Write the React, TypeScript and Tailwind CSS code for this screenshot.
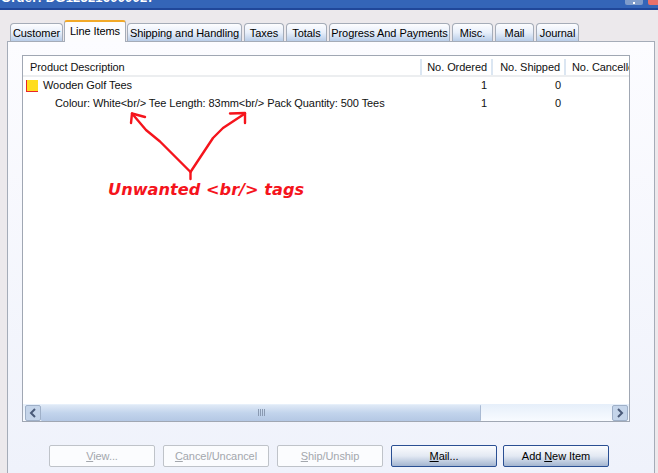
import { ReactNode } from "react";

const tabs = [
  { label: "Customer", width: "w-[53px]" },
  { label: "Line Items", width: "w-[62px]", active: true },
  { label: "Shipping and Handling", width: "w-[115px]" },
  { label: "Taxes", width: "w-[40px]" },
  { label: "Totals", width: "w-[41px]" },
  { label: "Progress And Payments", width: "w-[121px]" },
  { label: "Misc.", width: "w-[41px]" },
  { label: "Mail", width: "w-[39px]" },
  { label: "Journal", width: "w-[43px]" },
];

function Tab({ label, width, active }: { label: string; width: string; active?: boolean }) {
  if (active) {
    return (
      <div className={`${width} relative z-10 -mb-px h-[22px] -mx-px shrink-0 whitespace-nowrap rounded-t-[3px] border-t-2 border-x border-t-[#f2a928] border-x-[#a5acb8] bg-[#fcfcfe] text-center text-black leading-[18px]`}>
        {label}
      </div>
    );
  }
  return (
    <div className={`${width} h-[18px] shrink-0 whitespace-nowrap rounded-t-[4px] border border-b-0 border-[#a5acb8] bg-gradient-to-b from-[#fdfdff] via-[#e8effa] to-[#b9cde8] text-center text-black leading-[18px]`}>
      {label}
    </div>
  );
}

function ActionButton({ children, disabled, margin = "mr-2" }: { children: ReactNode; disabled?: boolean; margin?: string }) {
  const look = disabled
    ? "border-[#bfc3c9] bg-[#fbfcfe] text-[#a3a7ad]"
    : "border-[#2a4f93] bg-gradient-to-b from-[#fbfcfe] via-[#e3e9f3] to-[#a3b5d0] text-black";
  return (
    <div className={`${look} ${margin} flex h-[22px] w-[106px] shrink-0 items-center justify-center rounded-[2px] border`}>
      {children}
    </div>
  );
}

function ScrollButton({ dir }: { dir: "left" | "right" }) {
  return (
    <div className="flex h-[16px] w-[16px] shrink-0 items-center justify-center rounded-[2px] border border-[#9fb0c8] bg-[#c5d5ea]">
      <svg width="8" height="10" viewBox="0 0 8 10">
        <path d={dir === "left" ? "M6 1 L2 5 L6 9" : "M2 1 L6 5 L2 9"} fill="none" stroke="#4a5a78" strokeWidth="2" />
      </svg>
    </div>
  );
}

export default function App() {
  return (
    <div className="relative flex h-[473px] w-[658px] flex-col overflow-hidden bg-[#ece9ec] text-[11px] tracking-[-0.07px] font-['Liberation_Sans',sans-serif]">
      {/* Cropped title bar */}
      <div className="flex h-[10px] shrink-0 items-start justify-between overflow-hidden border-b-2 border-[#20479a] bg-[#3465b8]">
        <span className="-mt-[9px] pl-[1px] text-[13px] font-bold leading-[14px] tracking-[0.2px] text-white whitespace-nowrap">Order: DG123216000027</span>
        <div className="flex items-start">
          <div className="mr-[5px] flex h-[5px] w-[18px] items-center justify-center rounded-b-[2px] bg-[#7f9ccb]">
            <div className="h-[2px] w-[2px] bg-white" />
          </div>
          <div className="h-[5px] w-[10px] rounded-bl-[2px] bg-[#e8706a]" />
        </div>
      </div>

      {/* Tabs */}
      <div className="ml-[10px] mt-[11px] flex h-[20px] shrink-0 items-end gap-[2px]">
        {tabs.map((t) => (
          <Tab key={t.label} {...t} />
        ))}
      </div>

      {/* Tab page */}
      <div className="ml-[7px] w-[648px] flex-1 border-x border-t-[1px] border-[#a5acb8] bg-gradient-to-b from-[#fcfcff] to-[#eff2fb] px-[14px] pt-[13px]">
        <div className="flex h-[367px] w-[608px] flex-col border border-[#a0a7b3] bg-white">
          {/* Header */}
          <div className="flex h-[21px] shrink-0 items-center border-b-2 border-[#eceef0] pt-[3px] text-[#111]">
            <div className="w-[397px] pl-[7px]">Product Description</div>
            <div className="w-[71px] border-l-2 border-[#dbe6f2] pr-[4px] text-right leading-[16px]">No. Ordered</div>
            <div className="w-[73px] border-l-2 border-[#dbe6f2] pr-[4px] text-right leading-[16px]">No. Shipped</div>
            <div className="w-[65px] overflow-hidden whitespace-nowrap border-l-2 border-[#dbe6f2] pl-[6px] leading-[16px]">No. Cancelled</div>
          </div>

          {/* Rows */}
          <div className="flex h-[17px] items-center text-[#111]">
            <div className="flex w-[397px] items-center pl-[3px]">
              <div className="mr-[5px] h-[12px] w-[12px] border-b border-l border-[#e8262a] bg-[#ffdd1e]" />
              Wooden Golf Tees
            </div>
            <div className="w-[67px] text-right">1</div>
            <div className="w-[74px] text-right">0</div>
          </div>
          <div className="flex h-[17px] items-center pt-[1px] text-[#111]">
            <div className="w-[397px] whitespace-nowrap pl-[32px]">{"Colour: White<br/> Tee Length: 83mm<br/> Pack Quantity: 500 Tees"}</div>
            <div className="w-[67px] text-right">1</div>
            <div className="w-[74px] text-right">0</div>
          </div>

          {/* Scrollbar */}
          <div className="mt-auto flex h-[17px] shrink-0 items-center bg-gradient-to-b from-[#e6effa] to-[#f8fbff] pl-[2px] pr-[1px]">
            <ScrollButton dir="left" />
            <div className="flex h-[16px] w-[440px] items-center justify-center rounded-[1px] border-r border-[#a9bad3] bg-gradient-to-b from-[#dfe9f6] via-[#c2d4ec] to-[#b4c8e4]">
              <div className="ml-[1px] flex gap-[1px]">
                <div className="h-[7px] w-px bg-[#8a9ab2]" />
                <div className="h-[7px] w-px bg-[#8a9ab2]" />
                <div className="h-[7px] w-px bg-[#8a9ab2]" />
                <div className="h-[7px] w-px bg-[#8a9ab2]" />
              </div>
            </div>
            <div className="flex-1" />
            <ScrollButton dir="right" />
          </div>
        </div>

        {/* Action buttons */}
        <div className="ml-[27px] mt-[23px] flex">
          <ActionButton disabled><span><u>V</u>iew...</span></ActionButton>
          <ActionButton disabled><span><u>C</u>ancel/Uncancel</span></ActionButton>
          <ActionButton disabled><span><u>S</u>hip/Unship</span></ActionButton>
          <ActionButton margin="mr-[6px]"><span><u>M</u>ail...</span></ActionButton>
          <ActionButton><span>Add <u>N</u>ew Item</span></ActionButton>
        </div>
      </div>

      {/* Hand-drawn annotation */}
      <svg className="absolute left-0 top-0 pointer-events-none" width="658" height="473" viewBox="0 0 658 473" fill="none">
        <g stroke="#f5141c" strokeWidth="2.4" strokeLinecap="round" strokeLinejoin="round">
          <path d="M190.5 179 L190.5 172 L160 141.5 L146 130 L132 113.5" />
          <path d="M131 123 L132 113.5 L145 117" />
          <path d="M190.5 172 L213 138 L223 128 L245 113.5" />
          <path d="M230 113.5 L245 113 L245 123" />
        </g>
      </svg>
      <div className="absolute left-[108px] top-[180px] whitespace-nowrap text-[16.2px] tracking-normal font-bold italic leading-[19px] text-[#f5141c] font-['DejaVu_Sans',sans-serif]">
        {"Unwanted <br/> tags"}
      </div>
    </div>
  );
}
